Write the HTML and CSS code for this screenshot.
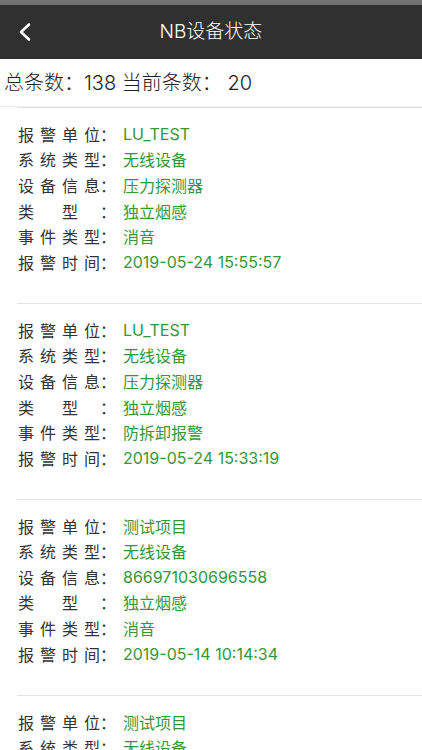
FILE: index.html
```html
<!DOCTYPE html>
<html lang="zh-CN">
<head>
<meta charset="utf-8">
<title>NB设备状态</title>
<link rel="stylesheet" href="styles.css">
</head>
<body>
<div class="statusbar"></div>
<header class="navbar">
  <div class="back">
    <svg width="14" height="20" viewBox="0 0 14 20"><polyline points="11,2.5 3,10 11,17.5" fill="none" stroke="#ffffff" stroke-width="2.6" stroke-linecap="round" stroke-linejoin="round"/></svg>
  </div>
  <div class="title">NB设备状态</div>
  <div class="spacer"></div>
</header>
<div class="count">总条数：138 当前条数： 20</div>
<main class="list">
  <section class="card">
    <div class="row"><span class="label"><span class="k">报警单位</span><span class="colon">：</span></span><span class="v">LU_TEST</span></div>
    <div class="row"><span class="label"><span class="k">系统类型</span><span class="colon">：</span></span><span class="v">无线设备</span></div>
    <div class="row"><span class="label"><span class="k">设备信息</span><span class="colon">：</span></span><span class="v">压力探测器</span></div>
    <div class="row"><span class="label"><span class="k">类　型</span><span class="colon">：</span></span><span class="v">独立烟感</span></div>
    <div class="row"><span class="label"><span class="k">事件类型</span><span class="colon">：</span></span><span class="v">消音</span></div>
    <div class="row"><span class="label"><span class="k">报警时间</span><span class="colon">：</span></span><span class="v">2019-05-24 15:55:57</span></div>
  </section>
  <section class="card">
    <div class="row"><span class="label"><span class="k">报警单位</span><span class="colon">：</span></span><span class="v">LU_TEST</span></div>
    <div class="row"><span class="label"><span class="k">系统类型</span><span class="colon">：</span></span><span class="v">无线设备</span></div>
    <div class="row"><span class="label"><span class="k">设备信息</span><span class="colon">：</span></span><span class="v">压力探测器</span></div>
    <div class="row"><span class="label"><span class="k">类　型</span><span class="colon">：</span></span><span class="v">独立烟感</span></div>
    <div class="row"><span class="label"><span class="k">事件类型</span><span class="colon">：</span></span><span class="v">防拆卸报警</span></div>
    <div class="row"><span class="label"><span class="k">报警时间</span><span class="colon">：</span></span><span class="v">2019-05-24 15:33:19</span></div>
  </section>
  <section class="card">
    <div class="row"><span class="label"><span class="k">报警单位</span><span class="colon">：</span></span><span class="v">测试项目</span></div>
    <div class="row"><span class="label"><span class="k">系统类型</span><span class="colon">：</span></span><span class="v">无线设备</span></div>
    <div class="row"><span class="label"><span class="k">设备信息</span><span class="colon">：</span></span><span class="v">866971030696558</span></div>
    <div class="row"><span class="label"><span class="k">类　型</span><span class="colon">：</span></span><span class="v">独立烟感</span></div>
    <div class="row"><span class="label"><span class="k">事件类型</span><span class="colon">：</span></span><span class="v">消音</span></div>
    <div class="row"><span class="label"><span class="k">报警时间</span><span class="colon">：</span></span><span class="v">2019-05-14 10:14:34</span></div>
  </section>
  <section class="card">
    <div class="row"><span class="label"><span class="k">报警单位</span><span class="colon">：</span></span><span class="v">测试项目</span></div>
    <div class="row"><span class="label"><span class="k">系统类型</span><span class="colon">：</span></span><span class="v">无线设备</span></div>
    <div class="row"><span class="label"><span class="k">设备信息</span><span class="colon">：</span></span><span class="v">866971030696558</span></div>
    <div class="row"><span class="label"><span class="k">类　型</span><span class="colon">：</span></span><span class="v">独立烟感</span></div>
    <div class="row"><span class="label"><span class="k">事件类型</span><span class="colon">：</span></span><span class="v">消音</span></div>
    <div class="row"><span class="label"><span class="k">报警时间</span><span class="colon">：</span></span><span class="v">2019-05-14 10:12:05</span></div>
  </section>
</main>
</body>
</html>
```

FILE: styles.css
```css
html, body {
  margin: 0;
  padding: 0;
  background: #ffffff;
}
body {
  font-family: Inter, "Noto Sans CJK SC", sans-serif;
  color: #333333;
  overflow: hidden;
}
.statusbar {
  height: 5px;
  background: #717171;
}
.navbar {
  height: 54px;
  background: #303030;
  display: grid;
  grid-template-columns: 60px 1fr 60px;
  align-items: center;
}
.back {
  display: flex;
  align-items: center;
  padding-left: 18px;
  height: 20px;
}
.back svg {
  display: block;
}
.title {
  text-align: center;
  color: #ffffff;
  font-size: 19px;
  line-height: 26px;
  font-weight: 300;
}
.count {
  height: 47px;
  line-height: 48px;
  padding-left: 4px;
  font-size: 20px;
  color: #222222;
  font-weight: 300;
  border-bottom: 1px solid #eeeeee;
}
.list {
  display: flex;
  flex-direction: column;
}
.card {
  margin-left: 17px;
  border-top: 1px solid #e2e2e2;
  padding: 13px 0 28.4px 1px;
}
.row {
  display: flex;
  align-items: center;
  height: 25.6px;
  font-size: 16px;
  white-space: nowrap;
}
.label {
  display: flex;
  justify-content: space-between;
  width: 98px;
  margin-right: 7px;
  flex: none;
  font-family: "Noto Sans CJK SC", sans-serif;
  color: #333333;
}
.k {
  letter-spacing: 6px;
  margin-right: -6px;
}
.v {
  color: #35973a;
  font-family: Inter, "Noto Sans CJK SC", sans-serif;
}
```
